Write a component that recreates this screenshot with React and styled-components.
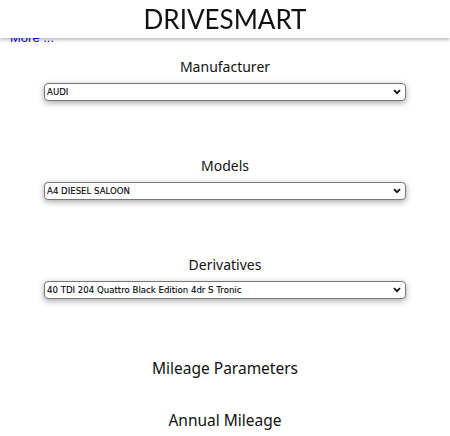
import React from 'react';
import styled, { createGlobalStyle } from 'styled-components';

const GlobalStyle = createGlobalStyle`
  html, body {
    margin: 0;
    padding: 0;
    background: #fff;
  }
  body {
    font-family: "Noto Sans", "Open Sans", sans-serif;
    color: #111;
  }
`;

const Header = styled.header`
  position: fixed;
  top: 0;
  left: 0;
  right: 0;
  height: 38px;
  background: #fff;
  box-shadow: 0 2px 3px rgba(0, 0, 0, 0.25);
  display: flex;
  align-items: center;
  justify-content: center;
  z-index: 10;
`;

const Title = styled.h1`
  margin: 0;
  font-family: Lato, sans-serif;
  font-weight: 400;
  font-size: 26px;
  line-height: 38px;
  color: #111;
`;

const Content = styled.main`
  padding-top: 31px;
  display: flex;
  flex-direction: column;
  align-items: center;
`;

const MoreLink = styled.a`
  align-self: flex-start;
  margin-left: 10px;
  font-family: "Liberation Sans", Arial, sans-serif;
  font-size: 13px;
  line-height: 14px;
  color: #0000ee;
  text-decoration: none;
`;

const Field = styled.section`
  display: flex;
  flex-direction: column;
  align-items: center;
  margin-top: ${p => p.$gap}px;
`;

const Label = styled.label`
  display: block;
  font-size: 14px;
  line-height: 20px;
`;

const SelectWrap = styled.div`
  position: relative;
  margin-top: 6px;
  width: 362px;
  height: 18px;
`;

const Select = styled.select`
  appearance: none;
  display: block;
  box-sizing: border-box;
  margin: 0;
  width: 100%;
  height: 18px;
  padding: 0 20px 0 2px;
  border: 1px solid #777;
  border-radius: 4px;
  background: #fff;
  box-shadow: 0 2px 6px rgba(0, 0, 0, 0.35);
  font-family: "DejaVu Sans", Verdana, sans-serif;
  font-size: 8.6px;
  -webkit-text-stroke: 0.1px #000;
  color: #000;
  outline: none;
`;

const Chevron = styled.svg`
  position: absolute;
  right: 5px;
  top: 0;
  bottom: 0;
  margin: auto 0;
  width: 8px;
  height: 6px;
  pointer-events: none;
`;

const Heading = styled.h2`
  margin: 0;
  margin-top: ${p => p.$gap}px;
  font-weight: 400;
  font-size: 15.5px;
  line-height: 24px;
`;

const fields = [
  { label: 'Manufacturer', value: 'AUDI', gap: 12 },
  { label: 'Models', value: 'A4 DIESEL SALOON', gap: 55 },
  { label: 'Derivatives', value: '40 TDI 204 Quattro Black Edition 4dr S Tronic', gap: 55 },
];

export default function App() {
  return (
    <>
      <GlobalStyle />
      <Header>
        <Title>DRIVESMART</Title>
      </Header>
      <Content>
        <MoreLink href="#">More ...</MoreLink>
        {fields.map(f => (
          <Field key={f.label} $gap={f.gap}>
            <Label>{f.label}</Label>
            <SelectWrap>
              <Select defaultValue={f.value}>
                <option value={f.value}>{f.value}</option>
              </Select>
              <Chevron viewBox="0 0 8 6">
                <path d="M1 1.2 L4 4.2 L7 1.2" fill="none" stroke="#111" strokeWidth="1.8" />
              </Chevron>
            </SelectWrap>
          </Field>
        ))}
        <Heading $gap={57}>Mileage Parameters</Heading>
        <Heading $gap={28}>Annual Mileage</Heading>
      </Content>
    </>
  );
}
